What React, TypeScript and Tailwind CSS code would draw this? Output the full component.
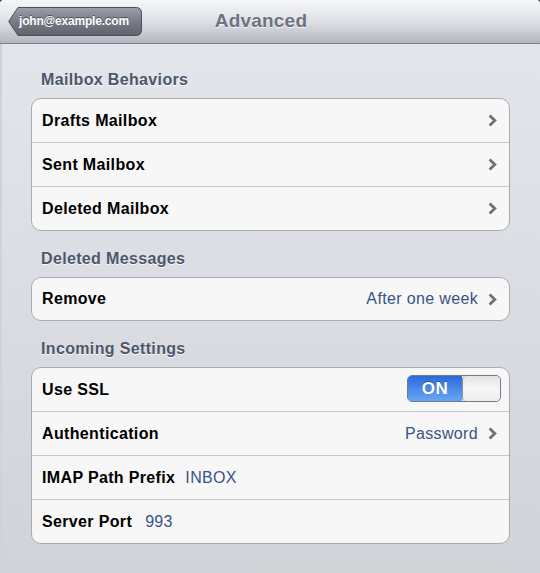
import React from 'react';

type Row = {
  label: string;
  value?: string;
  chevron?: boolean;
  inline?: boolean;
  gap?: string;
  toggle?: boolean;
};

const sections: { title: string; rows: Row[] }[] = [
  {
    title: 'Mailbox Behaviors',
    rows: [
      { label: 'Drafts Mailbox', chevron: true },
      { label: 'Sent Mailbox', chevron: true },
      { label: 'Deleted Mailbox', chevron: true },
    ],
  },
  {
    title: 'Deleted Messages',
    rows: [{ label: 'Remove', value: 'After one week', chevron: true }],
  },
  {
    title: 'Incoming Settings',
    rows: [
      { label: 'Use SSL', toggle: true },
      { label: 'Authentication', value: 'Password', chevron: true },
      { label: 'IMAP Path Prefix', value: 'INBOX', inline: true, gap: 'ml-[10px]' },
      { label: 'Server Port', value: '993', inline: true, gap: 'ml-[13px]' },
    ],
  },
];

const Chevron = () => (
  <svg width="9" height="13" viewBox="0 0 9 13" className="ml-[10px] shrink-0">
    <path d="M1.6 1.6 L6.8 6.5 L1.6 11.4" fill="none" stroke="#717171" strokeWidth="2.8" />
  </svg>
);

const Toggle = () => (
  <div className="mr-[-4px] -mt-[2px] flex h-[27px] w-[94px] overflow-hidden rounded-[5px] border border-[#6f7a8a]">
    <div className="flex w-[54px] items-center justify-center bg-gradient-to-b from-[#2a6ad8] to-[#6aa6f4] text-[17px] font-bold tracking-[0.5px] text-white [text-shadow:0_-1px_0_rgba(0,0,0,0.3)]">
      ON
    </div>
    <div className="flex-1 rounded-[4px] border-l border-[#8d8d8d] bg-gradient-to-b from-[#e3e3e3] via-[#f7f7f7] to-[#ececec]" />
  </div>
);

const BackButton = () => (
  <div className="absolute left-[8px] top-[7px] h-[29px] w-[134px]">
    <svg width="134" height="29" viewBox="0 0 134 29" className="absolute inset-0">
      <defs>
        <linearGradient id="bb" x1="0" y1="0" x2="0" y2="1">
          <stop offset="0" stopColor="#9a9fa9" />
          <stop offset="0.5" stopColor="#777c87" />
          <stop offset="1" stopColor="#5e636e" />
        </linearGradient>
      </defs>
      <path
        d="M10 0.5 H128.5 A5 5 0 0 1 133.5 5.5 V23.5 A5 5 0 0 1 128.5 28.5 H10 L0.7 14.5 Z"
        fill="url(#bb)"
        stroke="#4b4f59"
      />
    </svg>
    <span className="absolute left-[11px] top-[6px] text-[12px] leading-[16px] font-bold tracking-[-0.2px] text-white [text-shadow:0_-1px_0_rgba(0,0,0,0.45)]">
      john@example.com
    </span>
  </div>
);

export default function App() {
  return (
    <div className="h-[573px] w-[540px] overflow-hidden bg-[#3a3d44] font-['Liberation_Sans',Arial,sans-serif]">
      <div className="h-full rounded-t-[4px] border-l-2 border-[#cfd2d7] bg-gradient-to-b from-[#e4e7eb] to-[#d1d3d8]">
        {/* navigation bar */}
        <div className="relative -ml-[2px] flex h-[44px] items-center justify-center rounded-t-[4px] border-b border-[#7c808d] bg-gradient-to-b from-[#f5f6f8] via-[#dfe1e6] to-[#b2b6c0] pr-[18px]">
          <BackButton />
          <span className="text-[19px] font-bold tracking-[0.2px] text-[#6d7381] [text-shadow:0_1px_0_rgba(255,255,255,0.8)]">
            Advanced
          </span>
        </div>

        <div className="pl-[29px] pr-[30px] pt-[8px]">
          {sections.map((s) => (
            <div key={s.title}>
              <div className="pl-[10px] pt-[19px] pb-[9px] text-[16px] leading-[18px] font-bold tracking-[0.35px] text-[#4c566b] [text-shadow:0_1px_0_rgba(255,255,255,0.9)]">
                {s.title}
              </div>
              <div className="overflow-hidden rounded-[10px] border border-[#a9abb1] bg-[#f7f7f7]">
                {s.rows.map((r, i) => (
                  <div
                    key={r.label}
                    className={`flex items-center pl-[10px] pr-[12px] text-[16px] tracking-[0.35px] ${
                      i > 0
                        ? 'h-[44px] border-t border-[#c9c9cc]'
                        : s.rows.length === 1
                          ? 'h-[42px]'
                          : 'h-[43px]'
                    }`}
                  >
                    <span className="font-bold text-black">{r.label}</span>
                    {r.inline && <span className={`${r.gap} text-[#385487]`}>{r.value}</span>}
                    <div className="flex-1" />
                    {!r.inline && r.value && <span className="text-[#385487]">{r.value}</span>}
                    {r.chevron && <Chevron />}
                    {r.toggle && <Toggle />}
                  </div>
                ))}
              </div>
            </div>
          ))}
        </div>
      </div>
    </div>
  );
}
